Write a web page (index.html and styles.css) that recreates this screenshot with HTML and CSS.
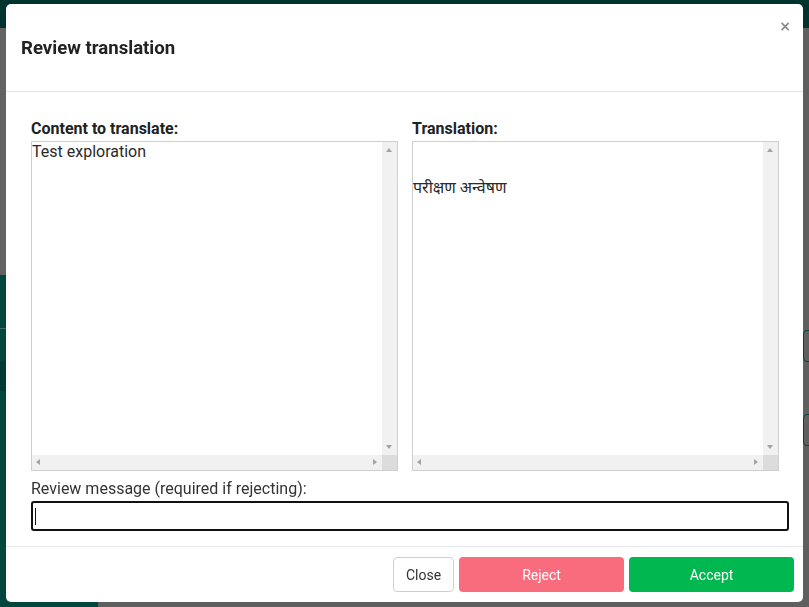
FILE: index.html
```html
<!DOCTYPE html>
<html lang="en">
<head>
<meta charset="utf-8">
<title>Review translation</title>
<link rel="stylesheet" href="styles.css">
</head>
<body>
<div class="page">
  <div class="topbar"></div>
  <div class="main">
    <div class="sidebar">
      <div class="side-top"></div>
      <div class="side-bottom">
        <div class="side-line"></div>
        <div class="side-band"></div>
      </div>
    </div>
    <div class="content">
      <div class="ghost-box box1"></div>
      <div class="ghost-box box2"></div>
    </div>
  </div>
</div>

<div class="modal">
  <div class="modal-header">
    <h4 class="modal-title">Review translation</h4>
    <button class="close" type="button">×</button>
  </div>
  <div class="modal-body">
    <div class="columns">
      <div class="col">
        <label class="field-label">Content to translate:</label>
        <div class="area-box">
          <textarea class="area" readonly>Test exploration</textarea>
          <div class="vbar"><span class="arr arr-up"></span><span class="arr arr-down"></span></div>
          <div class="hbar"><span class="arr arr-left"></span><span class="arr arr-right"></span></div>
          <div class="corner"></div>
        </div>
      </div>
      <div class="col">
        <label class="field-label">Translation:</label>
        <div class="area-box">
          <textarea class="area" readonly>


परीक्षण अन्वेषण</textarea>
          <div class="vbar"><span class="arr arr-up"></span><span class="arr arr-down"></span></div>
          <div class="hbar"><span class="arr arr-left"></span><span class="arr arr-right"></span></div>
          <div class="corner"></div>
        </div>
      </div>
    </div>
    <label class="msg-label">Review message (required if rejecting):</label>
    <div class="msg-wrap">
      <input class="msg-input" type="text">
      <span class="caret"></span>
    </div>
  </div>
  <div class="modal-footer">
    <button class="btn btn-close" type="button">Close</button>
    <button class="btn btn-reject" type="button">Reject</button>
    <button class="btn btn-accept" type="button">Accept</button>
  </div>
</div>
</body>
</html>
```
FILE: styles.css
```css
html, body {
  margin: 0;
  padding: 0;
  height: 100%;
  overflow: hidden;
}
body {
  font-family: Roboto, "Noto Sans", sans-serif;
  background: #5f5f5f;
}
.page {
  display: flex;
  flex-direction: column;
  height: 607px;
}
.topbar {
  height: 28px;
  background: #00332e;
  flex: none;
}
.main {
  flex: 1;
  display: flex;
}
.sidebar {
  width: 98px;
  display: flex;
  flex-direction: column;
}
.side-top {
  height: 247px;
  background: #636363;
}
.side-bottom {
  flex: 1;
  background: #01473d;
  padding-top: 53px;
}
.side-line {
  height: 1px;
  background: #4a6e66;
}
.side-band {
  height: 30px;
  margin-top: 32px;
  background: #003a32;
}
.content {
  flex: 1;
  display: flex;
  flex-direction: column;
  align-items: flex-end;
  padding-top: 302px;
}
.ghost-box {
  width: 20px;
  height: 30px;
  border: 1px solid #01473d;
  border-radius: 4px;
  margin-right: -16px;
}
.box2 { margin-top: 52px; }

.modal {
  position: fixed;
  top: 4px;
  left: 6px;
  width: 797px;
  height: 598px;
  background: #fff;
  border-radius: 5px;
  display: flex;
  flex-direction: column;
  box-sizing: border-box;
}
.modal-header {
  height: 88px;
  box-sizing: border-box;
  border-bottom: 1px solid #e5e5e5;
  position: relative;
  display: flex;
  align-items: center;
  padding: 0 15px;
}
.modal-title {
  margin: 0;
  font-size: 18.6px;
  font-weight: 700;
  color: #222;
}
.close {
  position: absolute;
  top: 13px;
  right: 12px;
  border: 0;
  background: none;
  padding: 0;
  font-family: "DejaVu Sans", sans-serif;
  font-size: 14px;
  font-weight: 700;
  color: #8a8a8a;
  line-height: 18px;
}
.modal-body {
  padding: 27px 14px 15px 25px;
  border-bottom: 1px solid #e3e7ea;
  flex: none;
}
.columns {
  display: grid;
  grid-template-columns: 367px 367px;
  column-gap: 14px;
}
.col {
  display: flex;
  flex-direction: column;
}
.field-label {
  font-size: 16px;
  font-weight: 700;
  color: #222;
  line-height: 20px;
  margin-bottom: 2px;
}
.area-box {
  height: 330px;
  box-sizing: border-box;
  border: 1px solid #cfcfcf;
  display: grid;
  grid-template-columns: 1fr 15px;
  grid-template-rows: 1fr 15px;
  background: #fff;
}
.area {
  grid-column: 1;
  grid-row: 1;
  margin: 0;
  border: 0;
  padding: 1px 0 0 0;
  resize: none;
  overflow: hidden;
  white-space: pre;
  font-family: Roboto, "Noto Sans", sans-serif;
  font-size: 16px;
  line-height: 18px;
  color: #2a2a2a;
  outline: none;
  background: transparent;
}
.vbar {
  grid-column: 2;
  grid-row: 1;
  background: #f1f1f1;
  position: relative;
}
.hbar {
  grid-column: 1;
  grid-row: 2;
  background: #f1f1f1;
  position: relative;
}
.corner {
  grid-column: 2;
  grid-row: 2;
  background: #dcdcdc;
}
.arr {
  position: absolute;
  width: 0;
  height: 0;
  border-style: solid;
  border-color: transparent;
}
.arr-up {
  top: 6px;
  left: 4px;
  border-width: 0 3.5px 4px 3.5px;
  border-bottom-color: #a3a3a3;
}
.arr-down {
  bottom: 6px;
  left: 4px;
  border-width: 4px 3.5px 0 3.5px;
  border-top-color: #a3a3a3;
}
.arr-left {
  left: 4px;
  top: 4px;
  border-width: 3.5px 4px 3.5px 0;
  border-right-color: #a3a3a3;
}
.arr-right {
  right: 5px;
  top: 4px;
  border-width: 3.5px 0 3.5px 4px;
  border-left-color: #a3a3a3;
}
.msg-label {
  display: block;
  font-size: 16px;
  color: #333;
  margin-top: 7px;
  line-height: 22px;
}
.msg-wrap {
  position: relative;
  margin-top: 1px;
  width: 758px;
}
.msg-input {
  display: block;
  width: 758px;
  height: 30px;
  box-sizing: border-box;
  margin: 0;
  border: 2px solid #111;
  border-radius: 3px;
  padding: 0 3px;
  font-size: 14px;
  outline: none;
}
.caret {
  position: absolute;
  left: 4px;
  top: 7px;
  width: 1px;
  height: 17px;
  background: #111;
}
.modal-footer {
  flex: 1;
  display: flex;
  justify-content: flex-end;
  align-items: flex-start;
  gap: 5px;
  padding: 10px 9px 0 0;
}
.btn {
  height: 35px;
  border-radius: 4px;
  font-family: Roboto, "Noto Sans", sans-serif;
  font-size: 14px;
  border: 1px solid transparent;
  padding: 0;
}
.btn-close {
  width: 61px;
  background: #fff;
  border-color: #cfcfcf;
  color: #333;
}
.btn-reject {
  width: 165px;
  background: #f96c7e;
  color: #fff;
}
.btn-accept {
  width: 165px;
  background: #00b84f;
  color: #fff;
}
```
